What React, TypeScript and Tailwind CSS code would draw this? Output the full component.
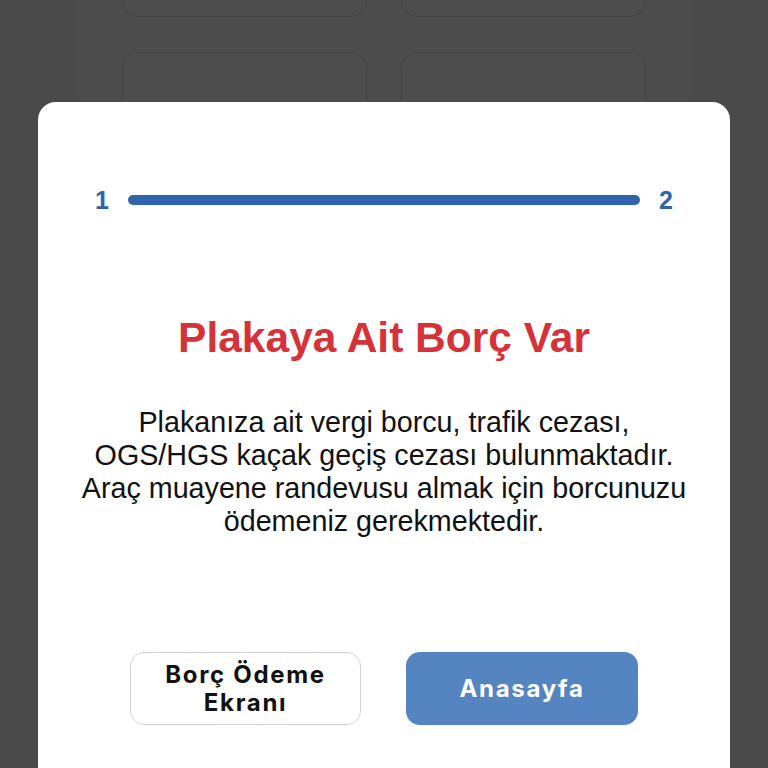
export default function App() {
  return (
    <div className="relative h-[768px] w-full overflow-hidden bg-[#4a4a4a] font-['Liberation_Sans',Arial,sans-serif]">
      {/* Dimmed page behind the sheet */}
      <div className="mx-auto h-full w-[610px] bg-[#4c4c4c]">
        <div className="grid grid-cols-2 gap-x-[34px] gap-y-[35px] px-[43px] pt-0 -mt-[60px]">
          <div className="h-[77px] rounded-2xl border border-[#444444] bg-[#4d4d4d]" />
          <div className="h-[77px] rounded-2xl border border-[#444444] bg-[#4d4d4d]" />
          <div className="h-[160px] rounded-2xl border border-[#444444] bg-[#4d4d4d]" />
          <div className="h-[160px] rounded-2xl border border-[#444444] bg-[#4d4d4d]" />
        </div>
      </div>

      {/* Bottom sheet */}
      <div className="absolute left-[38px] right-[38px] top-[102px] bottom-0 rounded-t-[18px] bg-white">
        <div className="flex flex-col items-center pt-[86px]">
          <div className="flex h-6 w-full items-center px-[55px]">
            <span className="w-[18px] text-center text-[25px] font-bold leading-6 text-[#2f64ab]">1</span>
            <div className="mx-[17px] h-[10px] flex-1 rounded-full bg-[#2f64ab]" />
            <span className="w-[18px] text-center text-[25px] font-bold leading-6 text-[#2f64ab]">2</span>
          </div>

          <h1 className="mt-[102px] text-[42.5px] font-bold leading-[48px] text-[#d4333a]">
            Plakaya Ait Borç Var
          </h1>

          <p className="mt-[44px] text-center text-[28.7px] leading-[33px] text-[#111111]">
            Plakanıza ait vergi borcu, trafik cezası,
            <br />
            OGS/HGS kaçak geçiş cezası bulunmaktadır.
            <br />
            Araç muayene randevusu almak için borcunuzu
            <br />
            ödemeniz gerekmektedir.
          </p>

          <div className="mt-[114px] flex gap-[45px] font-['Inter',sans-serif]">
            <button className="flex h-[73px] w-[231px] items-center justify-center rounded-[14px] border-[1.5px] border-[#d4d4d4] bg-white text-[24px] font-bold leading-[28px] tracking-[0.07em] text-[#111111]">
              Borç Ödeme
              <br />
              Ekranı
            </button>
            <button className="flex h-[73px] w-[232px] items-center justify-center rounded-[14px] bg-[#5585c0] text-[24px] font-bold tracking-[0.07em] text-white">
              Anasayfa
            </button>
          </div>
        </div>
      </div>
    </div>
  );
}
